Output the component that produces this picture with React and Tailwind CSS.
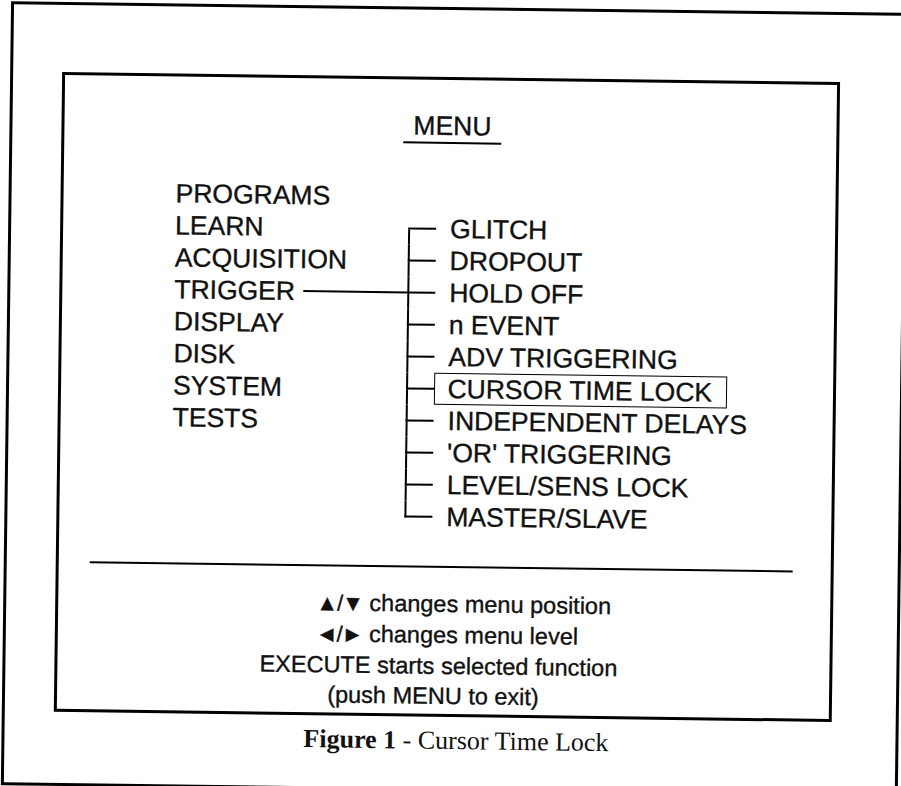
import React from "react";

const mainMenu = [
  "PROGRAMS",
  "LEARN",
  "ACQUISITION",
  "TRIGGER",
  "DISPLAY",
  "DISK",
  "SYSTEM",
  "TESTS",
];

const triggerMenu = [
  "GLITCH",
  "DROPOUT",
  "HOLD OFF",
  "n EVENT",
  "ADV TRIGGERING",
  "CURSOR TIME LOCK",
  "INDEPENDENT DELAYS",
  "'OR' TRIGGERING",
  "LEVEL/SENS LOCK",
  "MASTER/SLAVE",
];

function SubItem({ label, index, last }) {
  const selected = label === "CURSOR TIME LOCK";
  return (
    <div className="flex h-[32px]">
      <div className="flex w-[28px] flex-col">
        <div
          className={
            index > 0
              ? "h-[17px] border-b-2 border-l-2 border-black"
              : "h-[17px] border-b-2 border-black"
          }
        />
        <div className={last ? "h-[15px]" : "h-[15px] border-l-2 border-black"} />
      </div>
      {selected ? (
        <div className="flex h-[32px] w-[293px] items-center border-[1.5px] border-black pl-[12.5px]">
          {label}
        </div>
      ) : (
        <div className="flex items-center pl-[14px]">{label}</div>
      )}
    </div>
  );
}

export default function App() {
  return (
    <div className="h-[786px] w-[901px] overflow-hidden bg-white text-[#111]">
      <div className="h-[786px] w-[901px] rotate-[0.75deg]">
        <div className="ml-[6px] pt-[7px]">
          <div className="h-[784px] w-[897px] border-[3px] border-black">
            <div className="ml-[49px] mt-[67px] h-[640px] w-[778px] border-[3px] border-black font-['Liberation_Sans',Arial,sans-serif] text-[26.5px] leading-[32px] [-webkit-text-stroke:0.35px_#111]">
              <div className="flex justify-center pl-[4px] pt-[30px]">
                <span className="inline-block border-b-2 border-black px-[10px]">
                  MENU
                </span>
              </div>

              <div className="mt-[37px] flex pl-[112px]">
                <div className="flex w-[233px] flex-col">
                  {mainMenu.map((item) => (
                    <div key={item} className="flex h-[32px] items-center whitespace-nowrap">
                      <span>{item}</span>
                      {item === "TRIGGER" && (
                        <div className="ml-[8px] h-[2px] flex-1 bg-black" />
                      )}
                    </div>
                  ))}
                </div>
                <div className="mt-[32px] flex flex-col whitespace-nowrap">
                  {triggerMenu.map((item, i) => (
                    <SubItem
                      key={item}
                      label={item}
                      index={i}
                      last={i === triggerMenu.length - 1}
                    />
                  ))}
                </div>
              </div>

              <div className="ml-[31px] mt-[33px] h-[2px] w-[703px] bg-black" />

              <div className="mt-[21px] flex flex-col text-[23.5px] leading-[30px]">
                <div className="flex flex-col items-start pl-[258px]">
                  <div className="whitespace-nowrap">
                    <span className="text-[22px] tracking-[-1px]">▲/▼</span> changes menu position
                  </div>
                  <div className="whitespace-nowrap">
                    <span className="text-[22px] tracking-[-1px]">◄/►</span> changes menu level
                  </div>
                </div>
                <div className="flex justify-center pr-[10px]">
                  EXECUTE starts selected function
                </div>
                <div className="flex justify-center pr-[20px]">(push MENU to exit)</div>
              </div>
            </div>

            <div className="mt-[9px] flex justify-center pl-[12px] font-['Liberation_Serif','Times_New_Roman',serif] text-[26px] leading-[30px]">
              <span className="font-bold">Figure 1</span>
              <span className="whitespace-pre"> - Cursor Time Lock</span>
            </div>
          </div>
        </div>
      </div>
    </div>
  );
}
